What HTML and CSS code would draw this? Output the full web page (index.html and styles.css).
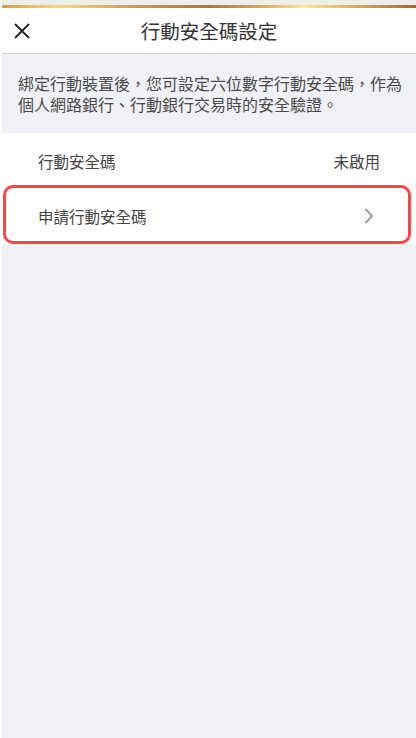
FILE: index.html
```html
<!DOCTYPE html>
<html lang="zh-Hant">
<head>
    <meta charset="UTF-8">
    <meta name="viewport" content="width=device-width, initial-scale=1.0">
    <title>行動安全碼設定</title>
    <link rel="stylesheet" href="styles.css">
</head>
<body>

    <div class="page">
        <div class="status-strip"></div>
        <div class="gold-bar"></div>

        <div class="header">
            <button class="close-btn" aria-label="關閉">
                <svg width="16" height="16" viewBox="0 0 16 16">
                    <path d="M1 1 L15 15 M15 1 L1 15" stroke="#222" stroke-width="1.8" fill="none"/>
                </svg>
            </button>
            <h1 class="title">行動安全碼設定</h1>
            <span class="spacer"></span>
        </div>

        <p class="intro">綁定行動裝置後，您可設定六位數字行動安全碼，作為個人網路銀行、行動銀行交易時的安全驗證。</p>

        <div class="list">
            <div class="row">
                <span class="label">行動安全碼</span>
                <span class="value">未啟用</span>
            </div>
            <div class="row row-link highlighted">
                <span class="label">申請行動安全碼</span>
                <svg class="chevron" width="10" height="16" viewBox="0 0 10 16">
                    <polyline points="1.5,1 8,8 1.5,15" stroke="#8a8a8a" stroke-width="1.6" fill="none"/>
                </svg>
            </div>
        </div>
    </div>

</body>
</html>
```

FILE: styles.css
```css
body {
    margin: 0;
    padding-left: 2px;
    background-color: #fff;
    font-family: "Noto Sans CJK TC", "Noto Sans", sans-serif;
    color: #333;
}

.page {
    background-color: #f0f1f6;
    min-height: 100vh;
    display: flex;
    flex-direction: column;
}

.status-strip {
    height: 5px;
    background-color: #eeeeee;
}

.gold-bar {
    height: 3px;
    background: linear-gradient(90deg, #e39b3f 0%, #f8d77e 14%, #d29a4f 32%, #b37536 50%, #d8a453 62%, #fce88c 73%, #dfa555 86%, #a9692a 100%);
}

.header {
    height: 45px;
    background-color: #fff;
    border-bottom: 1px solid #d2d2d2;
    display: grid;
    grid-template-columns: 48px 1fr 48px;
    align-items: center;
}

.close-btn {
    border: none;
    background: none;
    padding: 0;
    margin-left: 11px;
    width: 18px;
    height: 18px;
    display: flex;
    align-items: center;
    justify-content: center;
    cursor: pointer;
}

.title {
    margin: 0;
    text-align: center;
    font-size: 19.5px;
    font-weight: 400;
    color: #333;
}

.intro {
    margin: 0;
    padding: 19px 4px 18px 16px;
    font-size: 16px;
    line-height: 21px;
    color: #4a4a4a;
}

.list {
    background-color: #fff;
}

.row {
    height: 55px;
    padding: 0 36px;
    display: flex;
    align-items: center;
    justify-content: space-between;
    font-size: 15.5px;
    color: #444;
}

.row-link {
    height: 56px;
    cursor: pointer;
    position: relative;
}

.chevron {
    margin-right: 6px;
}

.highlighted::after {
    content: "";
    position: absolute;
    top: -3px;
    left: 1px;
    right: 5px;
    bottom: 0;
    border: 3px solid #ff4347;
    border-radius: 10px;
}
```
